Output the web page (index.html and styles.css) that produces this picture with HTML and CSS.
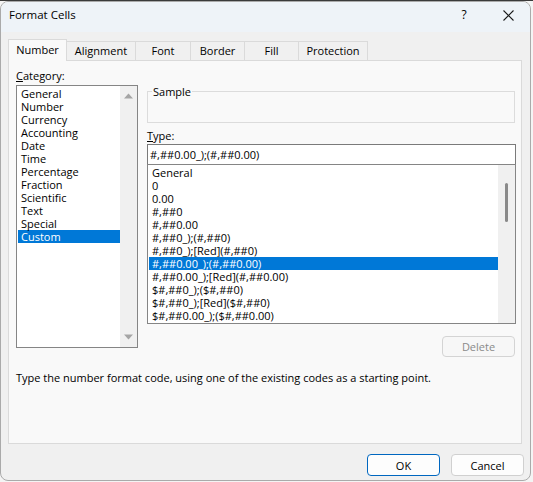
FILE: index.html
```html
<!DOCTYPE html>
<html lang="en">
<head>
<meta charset="utf-8">
<title>Format Cells</title>
<link rel="stylesheet" href="styles.css">
</head>
<body>
<div class="dialog">
  <div class="titlebar">
    <span class="title">Format Cells</span>
    <span class="help">?</span>
    <span class="close">
      <svg width="11" height="11" viewBox="0 0 11 11"><path d="M0.5 0.5L10.5 10.5M10.5 0.5L0.5 10.5" stroke="#1b1b1b" stroke-width="1.1" fill="none"/></svg>
    </span>
  </div>

  <div class="tabs">
    <div class="tab tab-number active">Number</div>
    <div class="tab tab-alignment">Alignment</div>
    <div class="tab tab-font">Font</div>
    <div class="tab tab-border">Border</div>
    <div class="tab tab-fill">Fill</div>
    <div class="tab tab-protection">Protection</div>
  </div>

  <div class="panel">
    <div class="columns">
      <div class="col-left">
        <div class="label"><u>C</u>ategory:</div>
        <div class="listbox category-list">
          <div class="items">
            <div class="item">General</div>
            <div class="item">Number</div>
            <div class="item">Currency</div>
            <div class="item">Accounting</div>
            <div class="item">Date</div>
            <div class="item">Time</div>
            <div class="item">Percentage</div>
            <div class="item">Fraction</div>
            <div class="item">Scientific</div>
            <div class="item">Text</div>
            <div class="item">Special</div>
            <div class="item selected">Custom</div>
          </div>
          <div class="vscroll arrows">
            <svg width="9" height="6" viewBox="0 0 9 6"><path d="M0 5.5L4.5 0.5L9 5.5Z" fill="#a5a5a5"/></svg>
            <svg width="9" height="6" viewBox="0 0 9 6"><path d="M0 0.5L4.5 5.5L9 0.5Z" fill="#a5a5a5"/></svg>
          </div>
        </div>
      </div>

      <div class="col-right">
        <fieldset class="sample">
          <legend>Sample</legend>
          <div class="sample-body"></div>
        </fieldset>
        <div class="label type-label"><u>T</u>ype:</div>
        <div class="type-input">#,##0.00_);(#,##0.00)</div>
        <div class="listbox type-list">
          <div class="items">
            <div class="item">General</div>
            <div class="item">0</div>
            <div class="item">0.00</div>
            <div class="item">#,##0</div>
            <div class="item">#,##0.00</div>
            <div class="item">#,##0_);(#,##0)</div>
            <div class="item">#,##0_);[Red](#,##0)</div>
            <div class="item selected">#,##0.00_);(#,##0.00)</div>
            <div class="item">#,##0.00_);[Red](#,##0.00)</div>
            <div class="item">$#,##0_);($#,##0)</div>
            <div class="item">$#,##0_);[Red]($#,##0)</div>
            <div class="item">$#,##0.00_);($#,##0.00)</div>
          </div>
          <div class="vscroll">
            <div class="thumb"></div>
          </div>
        </div>
        <button class="btn btn-disabled delete">Delete</button>
      </div>
    </div>
    <p class="description">Type the number format code, using one of the existing codes as a starting point.</p>
  </div>

  <div class="footer">
    <button class="btn btn-default">OK</button>
    <button class="btn">Cancel</button>
  </div>
</div>
</body>
</html>
```

FILE: styles.css
```css
* { box-sizing: border-box; }

html, body { margin: 0; padding: 0; }

body {
  background: #f4f4f4;
  border-top: 1px solid #3a3a3a;
  font-family: "Open Sans", "Noto Sans", sans-serif;
  font-size: 11px;
  color: #000;
}

.dialog {
  width: 531px;
  height: 480px;
  border: 1px solid #aaaaaa;
  border-radius: 8px;
  background: #f0f0f0;
  overflow: hidden;
  display: flex;
  flex-direction: column;
}

/* Title bar */
.titlebar {
  height: 30px;
  flex: none;
  background: #eef3f8;
  display: flex;
  align-items: flex-start;
  padding: 5px 0 0 8px;
}
.title {
  flex: 1;
  font-size: 11.5px;
  line-height: 16px;
}
.help {
  width: 12px;
  text-align: center;
  font-size: 12px;
  line-height: 16px;
  margin-right: 33px;
}
.close {
  margin-top: 3px;
  margin-right: 16px;
  display: flex;
}

/* Tabs */
.tabs {
  flex: none;
  height: 21px;
  margin-top: 7px;
  padding-left: 7px;
  display: flex;
  align-items: flex-end;
}
.tab {
  height: 19px;
  border: 1px solid #dadada;
  border-bottom: none;
  background: #f0f0f0;
  text-align: center;
  line-height: 18px;
  margin-left: -1px;
}
.tab.active {
  height: 22px;
  margin-bottom: -1px;
  margin-left: 0;
  background: #f9f9f9;
  position: relative;
  z-index: 1;
  line-height: 20px;
}
.tab-number { width: 59px; }
.tab-alignment { width: 70px; }
.tab-font { width: 56px; }
.tab-border { width: 55px; }
.tab-fill { width: 55px; }
.tab-protection { width: 70px; }

/* Panel */
.panel {
  flex: none;
  margin-left: 7px;
  width: 514px;
  height: 384px;
  border: 1px solid #dadada;
  background: #f9f9f9;
  padding: 7px 5px 0 7px;
}
.columns {
  display: grid;
  grid-template-columns: 122px 369px;
  column-gap: 9px;
}
.label {
  line-height: 15px;
  margin-bottom: 2px;
}
.label u { text-underline-offset: 1px; }

.listbox {
  display: flex;
  border: 1px solid #858585;
  background: #fff;
  overflow: hidden;
}
.items {
  flex: 1;
  padding: 1px 0 0 1px;
  overflow: hidden;
}
.item {
  line-height: 13px;
  height: 13px;
  padding-left: 3px;
  white-space: nowrap;
}
.item.selected {
  background: #0078d7;
  color: #fff;
}
.vscroll {
  width: 17px;
  flex: none;
  background: #f0f0f0;
}
.arrows {
  display: flex;
  flex-direction: column;
  justify-content: space-between;
  align-items: center;
  padding: 7px 0 7px 0;
}
.category-list {
  height: 263px;
}

/* Right column */
.col-right {
  display: flex;
  flex-direction: column;
}
.sample {
  margin: 16px 0 0 0;
  width: 368px;
  padding: 0 4px;
  border: 1px solid #dcdcdc;
}
.sample legend {
  padding: 0 1px;
  line-height: 15px;
}
.sample-body { height: 23px; }

.type-label {
  margin-top: 5px;
  margin-bottom: 1px;
}
.type-input {
  height: 21px;
  border: 1px solid #7a7a7a;
  background: #fff;
  padding-left: 2px;
  line-height: 19px;
}
.type-list {
  margin-top: -1px;
  height: 160px;
}
.thumb {
  margin: 18px 0 0 7px;
  width: 3px;
  height: 39px;
  border-radius: 2px;
  background: #8a8a8a;
}

/* Buttons */
.btn {
  font-family: inherit;
  font-size: 11px;
  color: #000;
  width: 73px;
  height: 22px;
  border: 1px solid #d0d0d0;
  border-radius: 4px;
  background: #fdfdfd;
  padding: 0;
}
.btn-default {
  border-color: #0067c0;
}
.btn-disabled {
  color: #8a8a8a;
  background: #f7f7f7;
  border-color: #d4d4d4;
}
.delete {
  align-self: flex-end;
  height: 21px;
  margin-top: 12px;
  margin-right: 1px;
}

.description {
  margin: 13px 0 0 0;
  line-height: 15px;
}

/* Footer */
.footer {
  display: flex;
  justify-content: flex-end;
  gap: 11px;
  margin-top: 10px;
  padding-right: 6px;
}
```
